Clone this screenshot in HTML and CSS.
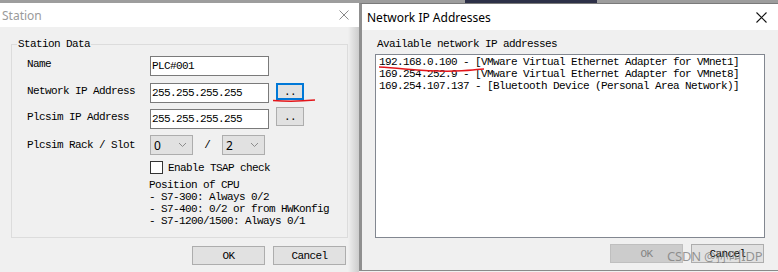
FILE: index.html
```html
<!DOCTYPE html>
<html>
<head>
<meta charset="utf-8">
<link rel="stylesheet" href="styles.css">
</head>
<body>
<div class="desk">
  <div class="strip"><span class="navy"></span></div>
  <div class="windows">
    <div class="station">
      <div class="title inactive">
        <span>Station</span>
        <svg class="close" width="10" height="10" viewBox="0 0 10 10"><path d="M0.5 0.5L9.5 9.5M9.5 0.5L0.5 9.5" stroke="#8a8a8a" stroke-width="1"/></svg>
      </div>
      <div class="body sbody">
        <fieldset class="group">
          <legend class="mono">Station Data</legend>
          <div class="form">
            <div class="row r1">
              <span class="lbl mono">Name</span>
              <div class="input mono">PLC#001</div>
            </div>
            <div class="row r2">
              <span class="lbl mono">Network IP Address</span>
              <div class="input mono">255.255.255.255</div>
              <div class="dots focus mono">..</div>
            </div>
            <div class="row r3">
              <span class="lbl mono">Plcsim IP Address</span>
              <div class="input mono">255.255.255.255</div>
              <div class="dots up mono">..</div>
            </div>
            <div class="row r4">
              <span class="lbl2 mono">Plcsim Rack / Slot</span>
              <div class="select"><span>0</span><svg width="7" height="4" viewBox="0 0 7 4"><path d="M0 0L3.5 3.5L7 0" fill="none" stroke="#8c8c8c" stroke-width="1"/></svg></div>
              <span class="slash mono">/</span>
              <div class="select"><span>2</span><svg width="7" height="4" viewBox="0 0 7 4"><path d="M0 0L3.5 3.5L7 0" fill="none" stroke="#8c8c8c" stroke-width="1"/></svg></div>
            </div>
            <div class="row r5">
              <span class="box"></span>
              <span class="mono chk">Enable TSAP check</span>
            </div>
            <div class="info mono">Position of CPU<br>- S7-300: Always 0/2<br>- S7-400: 0/2 or from HWKonfig<br>- S7-1200/1500: Always 0/1</div>
          </div>
        </fieldset>
        <div class="btns sbtns">
          <div class="btn mono">OK</div>
          <div class="btn mono">Cancel</div>
        </div>
      </div>
    </div>
    <div class="netdlg">
      <div class="title">
        <span>Network IP Addresses</span>
        <svg class="close" width="11" height="11" viewBox="0 0 11 11"><path d="M0.5 0.5L10.5 10.5M10.5 0.5L0.5 10.5" stroke="#111" stroke-width="1.1"/></svg>
      </div>
      <div class="body nbody">
        <div class="avail mono">Available network IP addresses</div>
        <div class="list mono">192.168.0.100 - [VMware Virtual Ethernet Adapter for VMnet1]
169.254.252.9 - [VMware Virtual Ethernet Adapter for VMnet8]
169.254.107.137 - [Bluetooth Device (Personal Area Network)]</div>
        <div class="btns nbtns">
          <div class="btn disabled mono">OK</div>
          <div class="btn mono">Cancel</div>
        </div>
      </div>
    </div>
  </div>
</div>
<div class="watermark">CSDN @孙叫IDP</div>
<svg class="marks" width="778" height="272" viewBox="0 0 778 272">
  <path d="M273 100.5 Q 294 102 315 100" fill="none" stroke="#e3161b" stroke-width="1.5"/>
  <path d="M379 67 C 410 69, 430 72, 455 71 S 475 69, 484 69" fill="none" stroke="#e3161b" stroke-width="1.5"/>
</svg>
</body>
</html>
```
FILE: styles.css
```css
html, body {
  margin: 0;
  padding: 0;
}
body {
  width: 778px;
  height: 272px;
  overflow: hidden;
  position: relative;
  background: #f0f0f0;
}
.mono {
  font-family: "Liberation Mono", monospace;
  font-size: 11px;
  letter-spacing: -0.6px;
  color: #000;
}
.desk {
  display: flex;
  flex-direction: column;
  height: 272px;
}
.strip {
  height: 3px;
  background: #9d9d9d;
  display: flex;
}
.navy {
  margin-left: 465px;
  width: 132px;
  height: 3px;
  background: #2d3047;
}
.windows {
  flex: 1;
  display: flex;
}
.station {
  width: 359px;
  display: flex;
  flex-direction: column;
}
.title {
  background: #fff;
  font-family: "Noto Sans", sans-serif;
  font-size: 12px;
  color: #000;
  display: flex;
  align-items: center;
  justify-content: space-between;
}
.station .title {
  height: 24px;
  padding: 0 10px 0 2px;
  color: #9a9a9a;
}
.body {
  flex: 1;
  display: flex;
  flex-direction: column;
}
.sbody {
  background: linear-gradient(to right, #f0f0f0 348px, #e2e2e2 352px, #cdcdcd 359px);
}
.group {
  margin: 11px 11px 0 11px;
  padding: 0;
  border: 1px solid #dcdcdc;
  height: 200px;
  box-sizing: border-box;
  min-width: 0;
}
.group legend {
  line-height: 12px;
  padding: 0 1px;
  margin-left: 5px;
}
.form {
  padding: 6px 0 0 15px;
  display: flex;
  flex-direction: column;
}
.row {
  display: flex;
  align-items: center;
  height: 20px;
}
.r2 { margin-top: 7px; }
.r3, .r4 { margin-top: 6px; }
.r5 { margin-top: 6px; height: 13px; }
.lbl {
  width: 123px;
  align-self: flex-start;
  padding-top: 2px;
  line-height: 12px;
}
.lbl2 {
  width: 123px;
  line-height: 12px;
}
.input {
  width: 119px;
  height: 20px;
  box-sizing: border-box;
  border: 1px solid #7a7a7a;
  background: #fff;
  padding-left: 1px;
  line-height: 18px;
}
.dots {
  margin-left: 7px;
  width: 28px;
  box-sizing: border-box;
  background: #e1e1e1;
  border: 1px solid #adadad;
  display: flex;
  align-items: center;
  justify-content: center;
  align-self: flex-start;
  line-height: 12px;
}
.dots.focus {
  height: 17px;
  border: 2px solid #0078d7;
}
.dots.up {
  height: 19px;
  margin-top: -2px;
}
.select {
  width: 43px;
  height: 20px;
  box-sizing: border-box;
  border: 1px solid #adadad;
  background: #e1e1e1;
  display: flex;
  align-items: center;
  justify-content: space-between;
  padding: 0 6px 0 3px;
  font-family: "Noto Sans", sans-serif;
  font-size: 12px;
  color: #000;
}
.slash {
  width: 29px;
  text-align: center;
  letter-spacing: 0;
}
.box {
  width: 13px;
  height: 13px;
  box-sizing: border-box;
  border: 1px solid #333;
  background: #fff;
  margin-left: 123px;
}
.chk {
  margin-left: 5px;
  line-height: 12px;
}
.info {
  margin-top: 5px;
  margin-left: 122px;
  line-height: 12px;
}
.btns {
  display: flex;
  justify-content: flex-end;
  gap: 8px;
}
.sbtns {
  margin-top: 8px;
  padding-right: 13px;
}
.btn {
  width: 73px;
  height: 19px;
  box-sizing: border-box;
  border: 1px solid #adadad;
  background: #e1e1e1;
  display: flex;
  align-items: center;
  justify-content: center;
  line-height: 12px;
}
.btn.disabled {
  background: #cccccc;
  border-color: #bfbfbf;
  color: #838383;
}
.netdlg {
  flex: 1;
  display: flex;
  flex-direction: column;
  border-left: 3px solid #8f8f8f;
  border-top: 1px solid #7a7a7a;
  border-bottom: 1px solid #8a8a8a;
  margin-bottom: 1px;
}
.netdlg .title {
  height: 26px;
  padding: 0 11px 0 5px;
}
.nbody {
  background: #f0f0f0;
  padding: 8px 13px 0 13px;
}
.avail {
  padding-left: 2px;
  line-height: 12px;
  margin-bottom: 4px;
}
.list {
  width: 390px;
  height: 184px;
  box-sizing: border-box;
  border: 1px solid #828790;
  background: #fff;
  padding: 1px 3px;
  line-height: 12px;
  white-space: pre;
  overflow: hidden;
}
.nbtns {
  margin-top: 6px;
  margin-right: 1px;
}
.watermark {
  position: absolute;
  left: 667px;
  top: 246px;
  font-family: "Noto Sans", "Noto Sans CJK SC", sans-serif;
  font-size: 13px;
  letter-spacing: -0.2px;
  color: rgba(120, 120, 120, 0.75);
  white-space: nowrap;
}
.marks {
  position: absolute;
  left: 0;
  top: 0;
  pointer-events: none;
}
```
